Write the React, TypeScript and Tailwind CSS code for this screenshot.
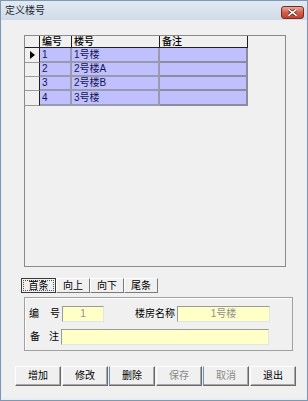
import React from "react";

const rows = [
  { id: "1", name: "1号楼", note: "", h: "h-[15px]" },
  { id: "2", name: "2号楼A", note: "", h: "h-[14px]" },
  { id: "3", name: "2号楼B", note: "", h: "h-[14px]" },
  { id: "4", name: "3号楼", note: "", h: "h-[15px]" },
];

function NavButton({ label, focused }: { label: string; focused?: boolean }) {
  if (focused) {
    return (
      <div className="w-[35px] h-[15px] border border-[#3a3a3a] bg-[#f0f0f0] flex items-center justify-center p-[1px]">
        <div className="w-full h-full border border-dotted border-[#555] flex items-center justify-center text-[10px] leading-none text-black">
          {label}
        </div>
      </div>
    );
  }
  return (
    <div className="w-[34px] h-[15px] border-t border-l border-white border-r border-b border-r-[#7a7a7a] border-b-[#7a7a7a] bg-[#f0f0f0] flex items-center justify-center text-[10px] leading-none text-black">
      {label}
    </div>
  );
}

function ActionButton({ label, disabled, blueLeft }: { label: string; disabled?: boolean; blueLeft?: boolean }) {
  return (
    <div
      className={
        "w-[46px] h-[20px] border-t border-white border-r border-b border-r-[#6a6a6a] border-b-[#6a6a6a] bg-[#f0f0f0] shadow-[inset_-1px_-1px_0_#a8a8a8] flex items-center justify-center text-[10px] leading-none " +
        (blueLeft ? "border-l border-l-[#6b8fc4] " : "border-l border-l-white ") +
        (disabled ? "text-[#8a8a8a]" : "text-black")
      }
    >
      {label}
    </div>
  );
}

const inputCls =
  "h-[16px] bg-[#ffffc8] border-t border-l border-[#9a9a9a] border-r border-b border-r-[#e4e4e4] border-b-[#e4e4e4] flex items-center justify-center text-[#909090]";

export default function App() {
  return (
    <div className="w-[308px] h-[401px] bg-[#e7ecf2] border border-[#7d98b3] flex flex-col font-['Liberation_Sans','Noto_Sans_CJK_SC',sans-serif] overflow-hidden">
      {/* Title bar */}
      <div className="h-[19px] flex items-center justify-between pl-[4px] pr-[3px] bg-gradient-to-b from-[#e2e9f2] to-[#cfdbe8]">
        <span className="text-[10px] leading-none text-[#1c2733]">定义楼号</span>
        <div className="w-[23px] h-[13px] mt-[3px] rounded-[3px] border border-[#7a2b22] bg-gradient-to-b from-[#e9a898] via-[#d2604c] to-[#c0412e] flex items-center justify-center">
          <svg width="9" height="7" viewBox="0 0 9 7">
            <path d="M1 0.8 L8 6.2 M8 0.8 L1 6.2" stroke="#5a1a12" strokeWidth="3" strokeLinecap="square" />
            <path d="M1 0.8 L8 6.2 M8 0.8 L1 6.2" stroke="#ffffff" strokeWidth="1.6" strokeLinecap="square" />
          </svg>
        </div>
      </div>

      {/* Client area */}
      <div className="flex-1 mx-[1px] mb-[2px] bg-[#f0f0f0] flex flex-col pt-[15px]">
        {/* Grid */}
        <div className="ml-[22px] w-[262px] h-[232px] border border-[#8a8a8a] bg-[#f0f0f0] flex flex-col">
          {/* Header */}
          <div className="flex h-[12px] text-[10px] leading-none text-black">
            <div className="w-[15px] h-full border-b border-r border-[#202020] bg-[#f0f0f0]" />
            <div className="w-[32px] h-full border-b border-r border-[#202020] flex items-end pl-[2px] font-medium">编号</div>
            <div className="w-[88px] h-full border-b border-r border-[#202020] flex items-end pl-[2px] font-medium">楼号</div>
            <div className="w-[88px] h-full border-b border-r border-[#202020] flex items-end pl-[2px] font-medium">备注</div>
          </div>
          {rows.map((r, i) => (
            <div key={r.id} className={"flex text-[10px] leading-none text-[#141452] " + r.h}>
              <div className="w-[15px] h-full border-b border-r border-b-[#9a9a9a] border-r-[#202020] bg-[#f0f0f0] flex items-center justify-center">
                {i === 0 && (
                  <svg width="5" height="8" viewBox="0 0 5 8">
                    <path d="M0 0 L5 4 L0 8 Z" fill="#000" />
                  </svg>
                )}
              </div>
              <div className="w-[32px] h-full border-b-2 border-r-2 border-[#9a9aae] bg-[#c0c0ff] flex items-center pl-[2px]">{r.id}</div>
              <div className="w-[88px] h-full border-b-2 border-r-2 border-[#9a9aae] bg-[#c0c0ff] flex items-center pl-[2px]">{r.name}</div>
              <div className="w-[88px] h-full border-b-2 border-r-2 border-[#8c8c9c] bg-[#c0c0ff] flex items-center pl-[2px]">{r.note}</div>
            </div>
          ))}
        </div>

        {/* Nav buttons */}
        <div className="ml-[19px] mt-[11px] flex">
          <NavButton label="首条" focused />
          <NavButton label="向上" />
          <NavButton label="向下" />
          <NavButton label="尾条" />
        </div>

        {/* Form panel */}
        <div className="ml-[22px] mt-[4px] w-[269px] h-[54px] border border-[#a0a0a0] shadow-[inset_1px_1px_0_#ffffff] flex flex-col pt-[8px] gap-[7px] text-[10px] leading-none text-black">
          <div className="flex items-center h-[16px]">
            <span className="ml-[4px]">编</span>
            <span className="ml-[11px]">号</span>
            <div className={"ml-[2px] w-[42px] " + inputCls}>1</div>
            <span className="ml-[31px]">楼房名称</span>
            <div className={"ml-[2px] w-[93px] " + inputCls}>1号楼</div>
          </div>
          <div className="flex items-center h-[16px]">
            <span className="ml-[5px]">备</span>
            <span className="ml-[9px]">注</span>
            <div className={"ml-[2px] w-[208px] " + inputCls} />
          </div>
        </div>

        {/* Bottom buttons */}
        <div className="ml-[13px] mt-[15px] flex gap-[1px]">
          <ActionButton label="增加" />
          <ActionButton label="修改" />
          <ActionButton label="删除" blueLeft />
          <ActionButton label="保存" disabled />
          <ActionButton label="取消" disabled blueLeft />
          <ActionButton label="退出" />
        </div>
      </div>
    </div>
  );
}
